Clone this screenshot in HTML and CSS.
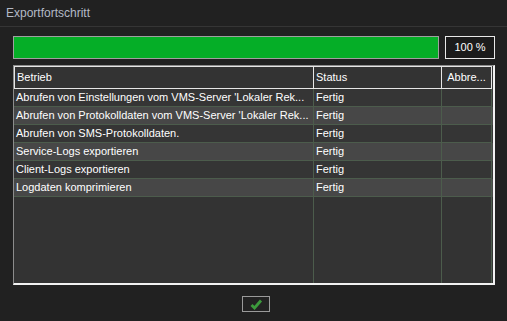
FILE: index.html
```html
<!DOCTYPE html>
<html lang="de">
<head>
  <meta charset="UTF-8" />
  <title>Exportfortschritt</title>
  <link rel="stylesheet" href="styles.css">
</head>
<body>
  <div class="dialog">
    <div class="title-bar">Exportfortschritt</div>

    <div class="content">
      <div class="progress-row">
        <div class="progress"><div class="progress-fill"></div></div>
        <div class="percent">100 %</div>
      </div>

      <div class="grid">
        <div class="row head">
          <div class="cell">Betrieb</div>
          <div class="cell">Status</div>
          <div class="cell center">Abbre...</div>
        </div>
        <div class="row">
          <div class="cell">Abrufen von Einstellungen vom VMS-Server 'Lokaler Rek...</div>
          <div class="cell">Fertig</div>
          <div class="cell"></div>
        </div>
        <div class="row alt">
          <div class="cell">Abrufen von Protokolldaten vom VMS-Server 'Lokaler Rek...</div>
          <div class="cell">Fertig</div>
          <div class="cell"></div>
        </div>
        <div class="row">
          <div class="cell">Abrufen von SMS-Protokolldaten.</div>
          <div class="cell">Fertig</div>
          <div class="cell"></div>
        </div>
        <div class="row alt">
          <div class="cell">Service-Logs exportieren</div>
          <div class="cell">Fertig</div>
          <div class="cell"></div>
        </div>
        <div class="row">
          <div class="cell">Client-Logs exportieren</div>
          <div class="cell">Fertig</div>
          <div class="cell"></div>
        </div>
        <div class="row alt">
          <div class="cell">Logdaten komprimieren</div>
          <div class="cell">Fertig</div>
          <div class="cell"></div>
        </div>
        <div class="row filler">
          <div class="cell"></div>
          <div class="cell"></div>
          <div class="cell"></div>
        </div>
      </div>
    </div>

    <div class="footer">
      <button class="ok-button" type="button" aria-label="OK">
        <svg width="13" height="11" viewBox="0 0 13 11">
          <path d="M1.5 6 L4.5 9 L11 1.5" fill="none" stroke="#3c9a3c" stroke-width="2.8" stroke-linejoin="miter"/>
        </svg>
      </button>
    </div>
  </div>
</body>
</html>
```

FILE: styles.css
```css
body {
  margin: 0;
  background-color: #212121;
  font-family: "Liberation Sans", Arial, sans-serif;
  font-size: 11px;
  color: #fff;
}

.dialog {
  width: 507px;
  height: 321px;
  display: flex;
  flex-direction: column;
}

.title-bar {
  height: 26px;
  line-height: 26px;
  padding-left: 6px;
  border-bottom: 1px solid #353535;
  color: #b4bac6;
  font-size: 12px;
}

.content {
  padding: 9px 12px 0 13px;
}

.progress-row {
  display: flex;
  gap: 6px;
  height: 23px;
}

.progress {
  flex: 1;
  border: 1px solid #a0a0a0;
  box-sizing: border-box;
  background: #1a1a1a;
}

.progress-fill {
  width: 100%;
  height: 100%;
  background-color: #05ae27;
}

.percent {
  width: 50px;
  box-sizing: border-box;
  border: 1px solid #e8e8e8;
  background: #1b1b1b;
  text-align: center;
  line-height: 21px;
}

.grid {
  margin-top: 6px;
  width: 482px;
  height: 220px;
  box-sizing: border-box;
  border-style: solid;
  border-width: 1px 2px 2px 1px;
  border-color: #8c8c8c #f2f2f2 #f2f2f2 #8c8c8c;
  background: #333;
  display: flex;
  flex-direction: column;
}

.row {
  display: grid;
  grid-template-columns: 300px 128px 50px;
  height: 18px;
  background: #353535;
}

.row.alt {
  background: #474747;
}

.cell {
  border-right: 1px solid #4c5c4c;
  border-bottom: 1px solid #4c5c4c;
  padding-left: 2px;
  line-height: 17px;
  white-space: nowrap;
  overflow: hidden;
}

.row.head {
  height: 23px;
  background: #333;
}

.row.head .cell {
  border: 1px solid #e6e6e6;
  border-left: none;
  line-height: 21px;
}

.row.head .cell:first-child {
  border-left: 1px solid #e6e6e6;
}

.cell.center {
  text-align: center;
  padding-left: 0;
}

.row.filler {
  flex: 1;
  background: #333;
}

.row.filler .cell {
  border-bottom: none;
}

.footer {
  display: flex;
  justify-content: center;
  padding-top: 11px;
  padding-left: 5px;
}

.ok-button {
  width: 28px;
  height: 16px;
  padding: 0;
  border: 1px solid #9a9a9a;
  background: #222;
  display: flex;
  align-items: center;
  justify-content: center;
}
```
